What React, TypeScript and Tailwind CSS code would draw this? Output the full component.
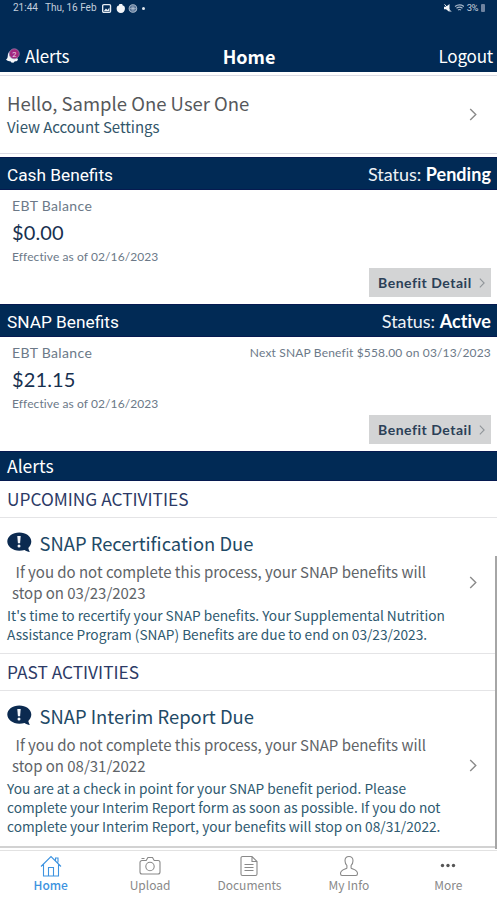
import type { ReactNode } from "react";

const SOURCE = "font-['Noto_Sans_CJK_SC',sans-serif]";
const LATO = "font-['Lato',sans-serif]";

function Chevron({ className }: { className: string }) {
  return (
    <svg viewBox="0 0 8 14" className={className} fill="none" stroke="currentColor" strokeWidth="1.5">
      <path d="M1 1l6 6-6 6" />
    </svg>
  );
}

function StatusBar() {
  return (
    <div className="flex h-4 items-center pl-[13px] pr-3 font-['Roboto',sans-serif] text-[10px] leading-4 text-[#c3cfdd]">
      <span className="w-8">21:44</span>
      <span className="w-[57px]">Thu, 16 Feb</span>
      <svg className="h-[9px] w-9" viewBox="0 0 32 8">
        <rect x="0.6" y="0.6" width="7" height="6.8" rx="1" fill="none" stroke="#e6ecf3" strokeWidth="1.2" />
        <path d="M1.5 6.5l2-2.4 1.4 1.2L6.6 3.2v3.3z" fill="#e6ecf3" />
        <path d="M15 1.4a1.6 1.6 0 0 1 3.4 0c1.2 0 2 .9 2 2.8S19 8 16.8 8 13 6.3 13 4.2s.9-2.8 2-2.8z" fill="#f2f5f9" />
        <circle cx="27.5" cy="4" r="3.4" fill="#4f6c90" stroke="#a9b9cb" strokeWidth="0.9" />
        <path d="M25 4h5M27.5 1.5v5M25.8 2.3l3.4 3.4M29.2 2.3l-3.400 3.4" stroke="#b7c5d5" strokeWidth="0.6" />
      </svg>
      <span className="ml-1 mt-px size-[2.5px] rounded-full bg-[#dfe6ee]" />
      <svg className="ml-auto h-2 w-5" viewBox="0 0 20 8">
        <path d="M0 2.8h2L5.5 0v8L2 5.2H0z" fill="#f2f5f9" />
        <path d="M0.5 0.3l6.5 7.4" stroke="#f2f5f9" strokeWidth="1" />
        <path d="M11 2.4q4.5-3 9 0M12.5 4.2q3-2 6 0M14 6q1.500-1 3 0" fill="none" stroke="#a9b9cb" strokeWidth="1.2" />
      </svg>
      <span className="ml-[3px] text-[9.5px] tracking-[-0.5px]">3%</span>
      <span className="ml-[3px] h-2 w-1 rounded-[1px] bg-[#6f83a0]" />
    </div>
  );
}

function AlertsBell() {
  return (
    <svg className="h-4 w-[15px]" viewBox="0 0 15 16">
      <path d="M0 11.500c2-1 1.600-3.500 2-5.500C2.600 3.500 5 2 7 3l5 8.500c-1 2-2 1.800-3.500 1.900-.5 1.600-3 1.800-3.700.1C3 13.400 1.500 13 0 11.500z" fill="#f4f6fa" />
      <circle cx="8.3" cy="5.8" r="5" fill="#a3287f" stroke="#8d7fa6" strokeWidth="0.8" />
      <text x="8.3" y="8.5" textAnchor="middle" fontSize="7.5" fill="#f0d5ea" fontFamily="Roboto">2</text>
    </svg>
  );
}

function SectionBar({ children, className }: { children: ReactNode; className: string }) {
  return (
    <div className={`flex items-center justify-between border-y border-[#061a50] bg-[#012a55] pl-[7px] pr-[6px] text-white ${className}`}>
      {children}
    </div>
  );
}

function BenefitTitle({ title, status }: { title: string; status: string }) {
  return (
    <>
      <span className="mt-[2px] font-['Roboto',sans-serif] text-[17.25px] leading-6 text-white">{title}</span>
      <span className={`${LATO} text-[18px] leading-6 tracking-[-0.03px] text-[#eef2f7]`}>
        Status: <b className="tracking-[0.05px] text-white">{status}</b>
      </span>
    </>
  );
}

function BenefitBody({ amount, next }: { amount: string; next?: string }) {
  return (
    <div className={`${LATO} flex h-[114px] shrink-0 flex-col pl-3 pr-[6px] pt-[5px]`}>
      <div className="flex items-center justify-between leading-[22px]">
        <span className="text-[14px] tracking-[0.35px] text-[#6c7988]">EBT Balance</span>
        {next && <span className="text-[12px] tracking-[0.17px] text-[#6c7988]">{next}</span>}
      </div>
      <div className="-mt-px mb-px text-[20px] leading-8 tracking-[0.15px] text-[#17304f]">{amount}</div>
      <div className="text-[12px] leading-4 tracking-[0.09px] text-[#6c7988]">Effective as of 02/16/2023</div>
      <button className="mb-[7px] mt-auto flex h-[29px] w-[122px] items-center self-end bg-[#d3d4d5] pl-[9px] text-[14px] font-bold tracking-[0.52px] text-[#2b4057]">
        Benefit Detail
        <Chevron className="ml-[7px] h-2.5 w-[6px] text-[#8f9499]" />
      </button>
    </div>
  );
}

function Heading({ children }: { children: string }) {
  return (
    <div className="flex h-[37px] shrink-0 items-center border-b border-[#e4e4e6] pl-[7px] text-[17.3px] tracking-[0.01px] text-[#2c3a66]">
      {children}
    </div>
  );
}

function BubbleIcon() {
  return (
    <svg className="mt-px h-[21px] w-[25px]" viewBox="0 0 25 21">
      <path d="M12.300.6c6.700 0 12 3.900 12 9 0 2.600-1.200 4.700-3 6.300.3 1.500.8 2.800 1.500 4-2-.2-3.800-1-5.200-2-1.600.5-3.400.8-5.300.8-6.700 0-12-4-12-9.100s5.300-9 12-9z" fill="#0b2a50" />
      <path d="M10.300 4h3.400l-.6 7.200h-2.200z" fill="#f4f6fa" />
      <circle cx="12" cy="14" r="1.5" fill="#f4f6fa" />
    </svg>
  );
}

function Activity({ title, due, lines, className }: { title: string; due: string; lines: string[]; className: string }) {
  return (
    <div className={`flex shrink-0 items-center justify-between pl-[7px] pr-5 ${className}`}>
      <div className="self-start whitespace-nowrap pt-[13px]">
        <div className="flex h-6 gap-[7.5px] text-[18.4px] leading-6 text-[#1f4a66]">
          <BubbleIcon />
          {title}
        </div>
        <p className="mt-[7px] pl-[5px] indent-[3.5px] text-[15px] leading-[20.5px] tracking-[-0.02px] text-[#606468]">
          If you do not complete this process, your SNAP benefits will
          <br />
          <span className="inline-block indent-0">stop on {due}</span>
        </p>
        <p className="mt-[3px] text-[13.7px] leading-[19px] text-[#2f5a70]">
          {lines.map((line) => (
            <span key={line} className="block">{line}</span>
          ))}
        </p>
      </div>
      <Chevron className="mt-[-6px] h-[13px] w-2 text-[#8a8a8a]" />
    </div>
  );
}

function Tab({ label, active, children }: { label: string; active?: boolean; children: ReactNode }) {
  return (
    <div className={`flex flex-col items-center pt-[4px] text-[12px] leading-4 ${active ? "text-[#3d93e0]" : "text-[#898989]"}`}>
      <svg className="h-[22px] w-6" viewBox="0 0 24 22" fill="none" stroke="currentColor" strokeWidth="1.1">
        {children}
      </svg>
      <span className={active ? "font-medium" : ""}>{label}</span>
    </div>
  );
}

export default function App() {
  return (
    <div className={`${SOURCE} relative flex h-[900px] w-[497px] flex-col overflow-hidden bg-white`}>
      <header className="h-[72px] shrink-0 bg-[#012a55] text-white">
        <StatusBar />
        <div className="mt-[28px] grid grid-cols-[1fr_auto_1fr] items-center pl-1.5 pr-1 text-[17px] leading-6">
          <span className="flex items-center gap-1 tracking-[-0.2px]">
            <AlertsBell />
            Alerts
          </span>
          <b className="-ml-px text-[18px]">Home</b>
          <span className="text-right tracking-[-0.2px]">Logout</span>
        </div>
      </header>

      <div className="mt-[3px] flex h-[79px] shrink-0 items-center justify-between border-y border-[#dcdce4] pl-[7px] pr-5">
        <div>
          <div className="text-[18.5px] leading-6 text-[#56585b]">Hello, Sample One User One</div>
          <div className="text-[15px] leading-6 tracking-[-0.05px] text-[#33566a]">View Account Settings</div>
        </div>
        <Chevron className="h-[13px] w-2 text-[#8a8a8a]" />
      </div>

      <SectionBar className="mt-[3px] h-[33px] shrink-0">
        <BenefitTitle title="Cash Benefits" status="Pending" />
      </SectionBar>
      <BenefitBody amount="$0.00" />

      <SectionBar className="h-[33px] shrink-0">
        <BenefitTitle title="SNAP Benefits" status="Active" />
      </SectionBar>
      <BenefitBody amount="$21.15" next="Next SNAP Benefit $558.00 on 03/13/2023" />

      <SectionBar className="h-[30px] shrink-0">
        <span className="text-[17.5px] leading-6">Alerts</span>
      </SectionBar>
      <Heading>UPCOMING ACTIVITIES</Heading>
      <Activity
        title="SNAP Recertification Due"
        due="03/23/2023"
        lines={[
          "It's time to recertify your SNAP benefits. Your Supplemental Nutrition",
          "Assistance Program (SNAP) Benefits are due to end on 03/23/2023.",
        ]}
        className="h-[136px] border-b border-[#e4e4e6]"
      />
      <Heading>PAST ACTIVITIES</Heading>
      <Activity
        title="SNAP Interim Report Due"
        due="08/31/2022"
        lines={[
          "You are at a check in point for your SNAP benefit period. Please",
          "complete your Interim Report form as soon as possible. If you do not",
          "complete your Interim Report, your benefits will stop on 08/31/2022.",
        ]}
        className="h-[155px]"
      />

      <nav className="shrink-0 border-t-2 border-[#d2d2d2]">
        <div className="-mr-px mt-[2px] grid grid-cols-5 border-t border-[#e2e2e2] pl-px">
          <Tab label="Home" active>
            <path d="M2 11.500L12 1.500l10 10M4.500 9.500V21h15V9.500M9.500 21v-8.500h5V21M16.500 3v2.500M16 3h3v4.500" />
          </Tab>
          <Tab label="Upload">
            <path d="M4.500 5.500h3.700l1.700-3h4.600l1.700 3h3.800a2 2 0 0 1 2 2V17a2 2 0 0 1-2 2h-16a2 2 0 0 1-2-2V7.500a2 2 0 0 1 2-2zM3.500 3.500h3" />
            <circle cx="12" cy="11.5" r="4.2" />
          </Tab>
          <Tab label="Documents">
            <path d="M5.500 1.500h9.500l5 5v12.500a1.500 1.500 0 0 1-1.500 1.500h-13A1.500 1.500 0 0 1 4 19V3a1.500 1.500 0 0 1 1.500-1.500zM15 1.500v5h5M7.500 9.500h9M7.500 12.500h9M7.500 15.500h9" />
          </Tab>
          <Tab label="My Info">
            <path d="M12 1.500c-2.400 0-4 1.800-4 4.200 0 2 .7 3.500 1.900 4.800v2.500c-.5 1.200-6.400 1.500-6.400 5.500 0 1.200.5 2 1.500 2h14c1 0 1.500-.8 1.500-2 0-4-5.900-4.300-6.400-5.500v-2.500c1.200-1.300 1.900-2.800 1.900-4.800 0-2.400-1.600-4.200-4-4.200z" />
          </Tab>
          <Tab label="More">
            <g fill="#555" stroke="none">
              <circle cx="6.5" cy="10.5" r="1.7" />
              <circle cx="12" cy="10.5" r="1.7" />
              <circle cx="17.5" cy="10.5" r="1.7" />
            </g>
          </Tab>
        </div>
      </nav>

      <div className="absolute right-0 top-[556px] h-[293px] w-[2px] bg-[#a6a6a6]" />
    </div>
  );
}
